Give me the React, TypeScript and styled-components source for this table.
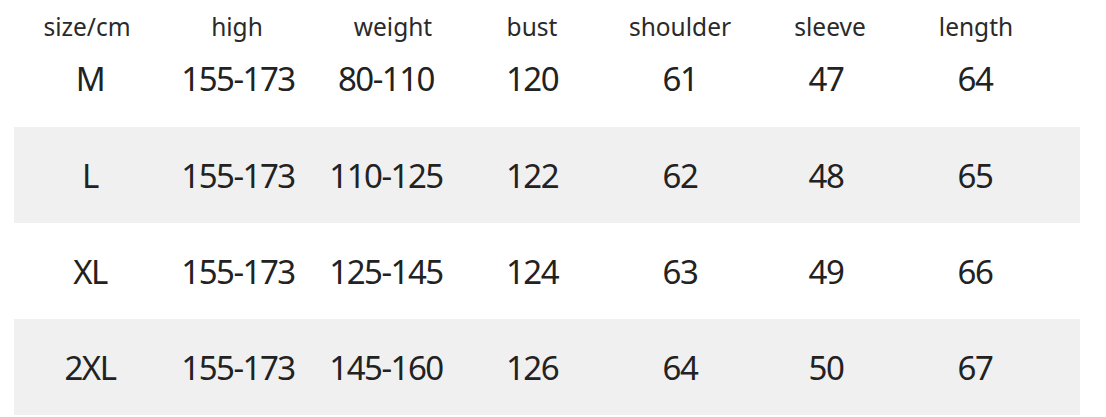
import React from 'react'
import styled, { createGlobalStyle } from 'styled-components'

const GlobalStyle = createGlobalStyle`
    html, body {
        margin: 0;
        padding: 0;
        background: #ffffff;
    }
    body {
        font-family: "Noto Sans", "Open Sans", "Liberation Sans", sans-serif;
        color: #222222;
    }
`

const columns = ['size/cm', 'high', 'weight', 'bust', 'shoulder', 'sleeve', 'length']

const rows = [
    { size: 'M', values: ['155-173', '80-110', '120', '61', '47', '64'], shaded: false },
    { size: 'L', values: ['155-173', '110-125', '122', '62', '48', '65'], shaded: true },
    { size: 'XL', values: ['155-173', '125-145', '124', '63', '49', '66'], shaded: false },
    { size: '2XL', values: ['155-173', '145-160', '126', '64', '50', '67'], shaded: true },
]

const App = () => {
    return (
        <>
            <GlobalStyle />
            <Chart>
                <Row $height={54}>
                    {columns.map((c, i) => (
                        <HeadCell key={c} $col={i}>{c}</HeadCell>
                    ))}
                </Row>
                <Row $height={48} $gapAfter={25}>
                    <Cell $col={0}>{rows[0].size}</Cell>
                    {rows[0].values.map((v, i) => (
                        <Cell key={i} $col={i + 1}>{v}</Cell>
                    ))}
                </Row>
                {rows.slice(1).map(r => (
                    <Row key={r.size} $height={96} $shaded={r.shaded}>
                        <Cell $col={0}>{r.size}</Cell>
                        {r.values.map((v, i) => (
                            <Cell key={i} $col={i + 1}>{v}</Cell>
                        ))}
                    </Row>
                ))}
            </Chart>
        </>
    )
}

export default App

// small per-column nudges so the text sits where it does in the chart
const headNudge = [-2, 0, 3, 0, 0, 2, 1]
const cellNudge = [1, 1, -4, 0, 0, -2, 0]

const Chart = styled.div`
    width: 1106px;
    height: 417px;
    padding: 0 26px 0 14px;
    box-sizing: border-box;
    display: flex;
    flex-direction: column;
    overflow: hidden;
`

const Row = styled.div<{ $height: number; $shaded?: boolean; $gapAfter?: number }>`
    height: ${({ $height }) => $height}px;
    margin-bottom: ${({ $gapAfter }) => $gapAfter ?? 0}px;
    display: grid;
    grid-template-columns: 150px 146px 160px 124px 172px 124px 170px;
    align-items: center;
    background: ${({ $shaded }) => ($shaded ? '#f0f0f0' : 'transparent')};
`

const HeadCell = styled.div<{ $col: number }>`
    text-align: center;
    font-size: 24.5px;
    color: #2a2a2a;
    line-height: 1;
    transform: translateX(${({ $col }) => headNudge[$col]}px);
`

const Cell = styled.div<{ $col: number }>`
    text-align: center;
    font-size: 33px;
    letter-spacing: -1.5px;
    color: #222222;
    line-height: 1;
    transform: translateX(${({ $col }) => cellNudge[$col]}px);
`
